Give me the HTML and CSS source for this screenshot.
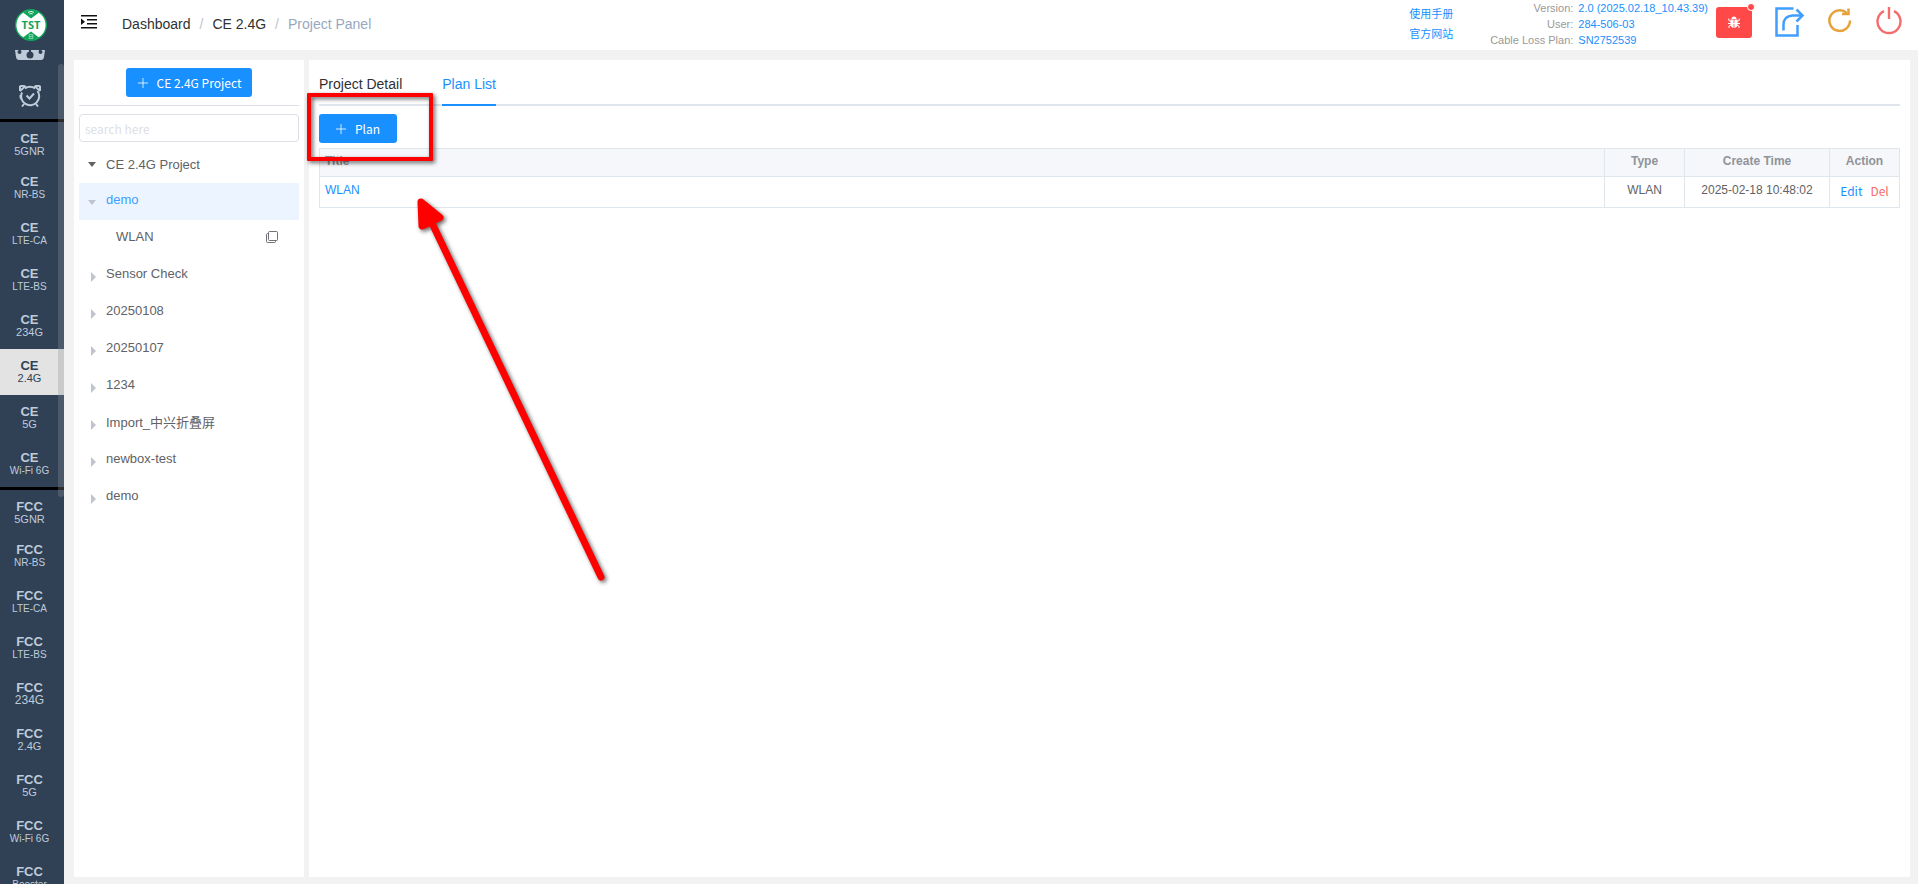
FILE: index.html
```html
<!DOCTYPE html>
<html lang="en">
<head>
	<meta charset="UTF-8">
	<meta name="viewport" content="width=device-width, initial-scale=1.0">
	<title>Project Panel</title>
	<link rel="stylesheet" href="styles.css">
</head>
<body>
	<div class="app">
		<aside class="sidebar">
			<a class="logo" href="#" aria-label="TST">
				<svg width="32" height="32" viewBox="0 0 32 32">
					<circle cx="16" cy="16" r="16" fill="#0fa45a"/>
					<circle cx="16" cy="16" r="14.6" fill="#fff"/>
					<path d="M8 3.500Q16-2 24 3.500L16 9.500zM8 28.500Q16 34 24 28.500L16 22.500z" fill="#0fa45a"/>
					<path d="M13 3.400q3-2 6 0M14.300 5q1.700-1 3.400 0" fill="none" stroke="#fff" stroke-width=".9"/>
					<path d="M14.200 25.500h3.600v4h-3.600zM14.200 27.500h3.600" fill="none" stroke="#9fdcbd" stroke-width=".8"/>
					<text class="logo-text" x="16" y="20" text-anchor="middle">TST</text>
				</svg>
			</a>
			<nav class="menu-wrap">
				<ul class="menu">
					<li><a class="icon-item" href="#" aria-label="Robot">
						<svg width="32" height="20" viewBox="0 0 32 20" fill="#bfcbd9">
							<path d="M4 0h24l3 10-1 7q-.5 3-3 3H5q-2.500 0-3-3l-1-7z"/>
							<g fill="#304156">
								<circle cx="5.500" cy="12" r="2"/>
								<circle cx="26.500" cy="12" r="2"/>
								<circle cx="16" cy="15" r="3.500"/>
								<path d="M15 9h2v4h-2zM5 9h2v2H5zM25 9h2v2h-2z"/>
							</g>
						</svg>
					</a></li>
					<li><a class="icon-item" href="#" aria-label="Schedule">
						<svg width="22" height="22" viewBox="0 0 22 22" fill="none" stroke="#bfcbd9" stroke-width="2">
							<path d="M6 3.400A9 9 0 0 1 16 3.400M18.500 6A9 9 0 1 1 3 7.500M1.500 10A9.500 9.500 0 0 0 2 14"/>
							<path d="M1 6V1.500Q3.500 0 6 1.500L1 6M21 6V1.500Q18.500 0 16 1.500L21 6M5 19l-2 2.500M17 19l2 2.500"/>
							<path d="M7.500 10.500l3 3 4.500-5"/>
						</svg>
					</a></li>
					<li class="group"><a href="#"><b>CE</b><span>5GNR</span></a></li>
					<li><a href="#"><b>CE</b><span class="long">NR-BS</span></a></li>
					<li><a href="#"><b>CE</b><span class="long">LTE-CA</span></a></li>
					<li><a href="#"><b>CE</b><span class="long">LTE-BS</span></a></li>
					<li><a href="#"><b>CE</b><span>234G</span></a></li>
					<li><a class="active" href="#"><b>CE</b><span>2.4G</span></a></li>
					<li><a href="#"><b>CE</b><span>5G</span></a></li>
					<li><a href="#"><b>CE</b><span class="long">Wi-Fi 6G</span></a></li>
					<li class="group"><a href="#"><b>FCC</b><span>5GNR</span></a></li>
					<li><a href="#"><b>FCC</b><span class="long">NR-BS</span></a></li>
					<li><a href="#"><b>FCC</b><span class="long">LTE-CA</span></a></li>
					<li><a href="#"><b>FCC</b><span class="long">LTE-BS</span></a></li>
					<li><a href="#"><b>FCC</b><span class="big">234G</span></a></li>
					<li><a href="#"><b>FCC</b><span>2.4G</span></a></li>
					<li><a href="#"><b>FCC</b><span>5G</span></a></li>
					<li><a href="#"><b>FCC</b><span class="long">Wi-Fi 6G</span></a></li>
					<li><a href="#"><b>FCC</b><span class="long">Booster</span></a></li>
				</ul>
				<div class="scroll-thumb"></div>
			</nav>
		</aside>

		<div class="main">
			<header class="navbar">
				<button class="hamburger" type="button" aria-label="Toggle menu">
					<svg width="16" height="16" viewBox="0 0 16 16" fill="#111">
						<path d="M0 1h16v1.500H0zM6 5h10v1.500H6zM6 9h10v1.500H6zM0 13h16v1.500H0zM0 4.500l4 3.200-4 3.200z"/>
					</svg>
				</button>
				<nav class="breadcrumb">
					<a href="#">Dashboard</a><i>/</i><a href="#">CE 2.4G</a><i>/</i><span>Project Panel</span>
				</nav>
				<div class="doc-links">
					<a href="#">使用手册</a>
					<a href="#">官方网站</a>
				</div>
				<dl class="info">
					<dt>Version:</dt><dd>2.0 (2025.02.18_10.43.39)</dd>
					<dt>User:</dt><dd>284-506-03</dd>
					<dt>Cable Loss Plan:</dt><dd>SN2752539</dd>
				</dl>
				<div class="tools">
					<button class="bug" type="button" aria-label="Bug log">
						<svg width="12" height="13" viewBox="0 0 12 13" fill="#fff">
							<path d="M3.500 3a2.500 2.500 0 0 1 5 0zM2.500 3.600h3.100V12Q2.500 11.500 2.500 8zM6.400 3.600h3.100V8Q9.500 11.500 6.400 12z"/>
							<path d="M.8 2.500v2L3 5.500M11.200 2.500v2L9 5.500M0 7.500h12M1 12v-2l2-1M11 12v-2L9 9" fill="none" stroke="#fff"/>
						</svg>
						<span class="dot"></span>
					</button>
					<button class="tool share" type="button" aria-label="Export">
						<svg width="30" height="30" viewBox="0 0 30 30" fill="none" stroke="#409eff" stroke-width="2.500">
							<path d="M18.500 1.500H1.500v27h21V18M8.500 23.500V18q0-9 9-9.500h9"/>
							<path d="M21.500 2.500l6 6-6 6"/>
						</svg>
					</button>
					<button class="tool reload" type="button" aria-label="Reload">
						<svg width="24" height="26" viewBox="0 0 24 26" fill="none" stroke="#e6a23c" stroke-width="2.500">
							<path d="M22 13.500a10.300 10.300 0 1 1-3.300-7.500"/>
							<path d="M20.500 1.500v5.500h-6.500"/>
						</svg>
					</button>
					<button class="tool power" type="button" aria-label="Log out">
						<svg width="26" height="28" viewBox="0 0 26 28" fill="none" stroke="#f56c6c" stroke-width="2.400">
							<path d="M8 4.200a11.500 11.500 0 1 0 10 0M13 0v12"/>
						</svg>
					</button>
				</div>
			</header>

			<div class="content">
				<section class="panel tree-panel">
					<div class="tree-head">
						<button class="btn" type="button">
							<svg width="10" height="10" viewBox="0 0 10 10"><path d="M5 0v10M0 5h10" stroke="#fff" stroke-width=".8"/></svg>
							CE 2.4G Project
						</button>
					</div>
					<input class="search" type="text" placeholder="search here" aria-label="search here">
					<ul class="tree">
						<li class="root open"><i class="caret"></i>CE 2.4G Project</li>
						<li class="open current"><i class="caret"></i>demo</li>
						<li class="leaf">WLAN
							<button class="copy" type="button" aria-label="Copy">
								<svg width="12" height="12" viewBox="0 0 12 12" fill="none" stroke="#606266" stroke-width=".9">
									<rect x="2.500" y=".5" width="9" height="9" rx="1"/>
									<path d="M2.500 2.500h-1q-1 0-1 1v7q0 1 1 1h7q1 0 1-1v-1"/>
								</svg>
							</button>
						</li>
						<li><i class="caret"></i>Sensor Check</li>
						<li><i class="caret"></i>20250108</li>
						<li><i class="caret"></i>20250107</li>
						<li><i class="caret"></i>1234</li>
						<li><i class="caret"></i>Import_中兴折叠屏</li>
						<li><i class="caret"></i>newbox-test</li>
						<li><i class="caret"></i>demo</li>
					</ul>
				</section>

				<section class="panel plan-panel">
					<nav class="tabs">
						<a href="#">Project Detail</a>
						<a class="active" href="#">Plan List</a>
					</nav>
					<button class="btn plan-btn" type="button">
						<svg width="10" height="10" viewBox="0 0 10 10"><path d="M5 0v10M0 5h10" stroke="#fff" stroke-width=".8"/></svg>
						Plan
					</button>
					<table class="plans">
						<thead>
							<tr><th class="title">Title</th><th class="type">Type</th><th class="time">Create Time</th><th class="action">Action</th></tr>
						</thead>
						<tbody>
							<tr>
								<td class="title"><a href="#">WLAN</a></td>
								<td>WLAN</td>
								<td>2025-02-18 10:48:02</td>
								<td class="ops"><button class="edit" type="button">Edit</button><button class="del" type="button">Del</button></td>
							</tr>
						</tbody>
					</table>

					<!-- guide marks over the Plan button -->
					<div class="mark-box"></div>
					<svg class="mark-arrow" width="200" height="400" viewBox="0 0 200 400">
						<g fill="#f00" stroke="#f00" stroke-linecap="round" stroke-linejoin="round">
							<path d="M21 22L40 37.500 22 46z" stroke-width="7"/>
							<path d="M31 41L201 397" stroke-width="7"/>
						</g>
					</svg>
				</section>
			</div>
		</div>
	</div>
</body>
</html>
```
FILE: styles.css
```css
* {
	box-sizing: border-box;
}

body {
	margin: 0;
	font-family: "Liberation Sans", "Noto Sans CJK SC", sans-serif;
	font-size: 13px;
	color: #606266;
	background: #f2f2f2;
}

a {
	color: #1890ff;
	text-decoration: none;
}

button {
	padding: 0;
	border: 0;
	background: none;
	font-family: "Noto Sans CJK SC", sans-serif;
	font-size: 12px;
	cursor: pointer;
}

svg {
	display: block;
}

ul {
	list-style: none;
	margin: 0;
	padding: 0;
}

.app {
	display: flex;
	height: 100vh;
	overflow: hidden;
}

/* sidebar */
.sidebar {
	flex: none;
	display: flex;
	flex-direction: column;
	width: 64px;
	background: #304156;
}

.logo {
	flex: none;
	height: 50px;
	padding: 9px 15px;
}

.logo-text {
	font: bold 11px "Open Sans", sans-serif;
	fill: #0fa45a;
}

.menu-wrap {
	position: relative;
	flex: 1;
	min-height: 0;
	overflow: hidden;
}

.menu {
	margin-top: -23px;
}

.menu a {
	display: flex;
	flex-direction: column;
	height: 46px;
	padding: 10px 5px 0 0;
	text-align: center;
	line-height: 13px;
	color: #bfcbd9;
}

.menu .group a {
	height: 43px;
}

.menu .group {
	border-top: 3px solid #000;
}

.menu a.icon-item {
	align-items: center;
	justify-content: center;
	padding-top: 0;
}

.menu a.active {
	background: #e3e3e3;
	color: #304156;
}

.menu span {
	font-size: 11px;
}

.menu .long {
	font-size: 10px;
}

.menu .big {
	font-size: 12px;
}

.scroll-thumb {
	position: absolute;
	top: 14px;
	right: 0;
	width: 6px;
	height: 433px;
	border-radius: 3px;
	background: rgba(144, 147, 153, 0.3);
}

/* top bar */
.main {
	flex: 1;
	min-width: 0;
	display: flex;
	flex-direction: column;
}

.navbar {
	flex: none;
	display: flex;
	align-items: flex-start;
	height: 50px;
	padding-right: 16px;
	background: #fff;
}

.hamburger {
	margin: 14px 25px 0 17px;
}

.breadcrumb {
	flex: 1;
	font-size: 14px;
	line-height: 48px;
}

.breadcrumb a {
	color: #303133;
}

.breadcrumb i {
	margin: 0 9px;
	font-style: normal;
	color: #c0c4cc;
}

.breadcrumb span {
	color: #97a8be;
}

.doc-links {
	display: flex;
	flex-direction: column;
	margin-top: 4px;
	font-size: 11px;
	line-height: 20px;
}

.info {
	display: grid;
	grid-template-columns: auto auto;
	column-gap: 5px;
	margin: 0 8px 0 37px;
	font-size: 11px;
	line-height: 16px;
}

.info dt {
	text-align: right;
	color: #999;
}

.info dd {
	margin: 0;
	color: #1890ff;
}

.tools {
	display: flex;
	align-items: flex-start;
	padding-top: 7px;
}

.bug {
	position: relative;
	display: flex;
	align-items: center;
	justify-content: center;
	width: 36px;
	height: 31px;
	border-radius: 3px;
	background: #ff4949;
}

.dot {
	position: absolute;
	top: -4px;
	right: -3px;
	width: 8px;
	height: 8px;
	border: 1px solid #fff;
	border-radius: 50%;
	background: #ff4949;
}

.share {
	margin-left: 23px;
}

.reload {
	margin-left: 23px;
}

.power {
	margin-left: 24px;
}

/* content */
.content {
	flex: 1;
	min-height: 0;
	display: flex;
	gap: 5px;
	padding: 10px 8px 7px 10px;
}

.panel {
	background: #fff;
}

.tree-panel {
	flex: none;
	width: 230px;
	padding: 8px 5px;
}

.tree-head {
	display: flex;
	justify-content: center;
	margin-bottom: 8px;
	padding-bottom: 8px;
	border-bottom: 1px solid #dcdfe6;
}

.btn {
	display: flex;
	align-items: center;
	gap: 9px;
	height: 29px;
	padding: 0 11px 0 12px;
	border-radius: 3px;
	background: #1890ff;
	color: #fff;
}

.search {
	display: block;
	width: 100%;
	height: 28px;
	padding: 0 5px;
	border: 1px solid #dcdfe6;
	border-radius: 4px;
	font-family: "Noto Sans CJK SC", sans-serif;
	font-size: 12px;
	color: #606266;
}

.search::placeholder {
	color: #dcdfe6;
}

.tree {
	margin-top: 4px;
}

.tree li {
	display: flex;
	align-items: center;
	height: 37px;
	padding: 0 21px 4px 12px;
}

.caret {
	width: 5px;
	height: 10px;
	margin: 6px 10px 0 0;
	border: 5px solid transparent;
	border-left-color: #c0c4cc;
	border-right-width: 0;
}

.tree li .caret {
	flex: none;
}

.tree .open .caret {
	width: 8px;
	height: 5px;
	margin: 6px 10px 0 -3px;
	border: 4px solid transparent;
	border-top: 5px solid #c0c4cc;
	border-bottom-width: 0;
}

.tree .root {
	padding-bottom: 0;
}

.tree .root .caret {
	margin-top: 0;
	border-top-color: #606266;
}

.tree .current {
	background: #ecf5ff;
	color: #409eff;
}

.tree .leaf {
	justify-content: space-between;
	padding-left: 37px;
}

/* plan list */
.plan-panel {
	position: relative;
	flex: 1;
	min-width: 0;
	padding: 8px 10px;
}

.tabs {
	display: flex;
	gap: 40px;
	height: 38px;
	border-bottom: 2px solid #dfe4ed;
	font-size: 14px;
	line-height: 32px;
}

.tabs a {
	height: 38px;
	color: #303133;
}

.tabs a.active {
	border-bottom: 2px solid #1890ff;
	color: #1890ff;
}

.plan-btn {
	margin: 8px 0 5px;
	padding: 0 17px;
}

.plans {
	width: 100%;
	border-collapse: collapse;
	table-layout: fixed;
	font-size: 12px;
}

.plans th,
.plans td {
	padding: 0 5px;
	border: 1px solid #dfe6ec;
	text-align: center;
	line-height: 20px;
}

.plans th {
	height: 28px;
	padding-bottom: 4px;
	background: #f5f7fa;
	color: #909399;
}

.plans td {
	height: 31px;
	padding-bottom: 5px;
}

.plans .title {
	text-align: left;
}

.plans .type {
	width: 80px;
}

.plans .time {
	width: 145px;
}

.plans .action {
	width: 70px;
}

.plans .ops {
	padding: 0;
}

.edit {
	margin-right: 8px;
	color: #1890ff;
}

.del {
	color: #f56c6c;
}

.mark-box {
	position: absolute;
	top: 33px;
	left: -2px;
	width: 126px;
	height: 68px;
	border: 4px solid #f00;
	border-radius: 1px;
	filter: drop-shadow(2px 2px 2px rgba(0, 0, 0, 0.6));
}

.mark-arrow {
	position: absolute;
	top: 120px;
	left: 91px;
	overflow: visible;
	filter: drop-shadow(2px 2px 2px rgba(0, 0, 0, 0.6));
}
```
